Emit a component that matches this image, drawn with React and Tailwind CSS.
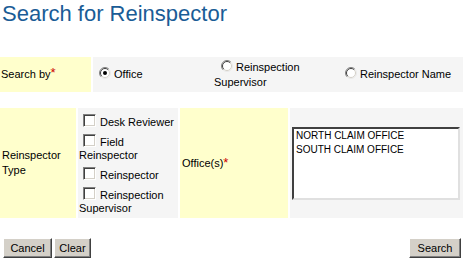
import React from "react";

function Radio({ checked }) {
  return (
    <svg width="12" height="12" viewBox="0 0 12 12" className="inline-block align-baseline mr-[3px] mb-[-1px]">
      <circle cx="6" cy="6" r="5.5" fill="#ffffff" />
      <path d="M 2.1 9.9 A 5.5 5.5 0 0 1 9.9 2.1" stroke="#808080" strokeWidth="1" fill="none" />
      <path d="M 9.9 2.1 A 5.5 5.5 0 0 1 2.1 9.9" stroke="#e8e8e8" strokeWidth="1" fill="none" />
      <path d="M 2.8 9.2 A 4.5 4.5 0 0 1 9.2 2.8" stroke="#404040" strokeWidth="1" fill="none" />
      <path d="M 9.2 2.8 A 4.5 4.5 0 0 1 2.8 9.2" stroke="#d4d0c8" strokeWidth="1" fill="none" />
      {checked && <circle cx="6" cy="6" r="2" fill="#000000" />}
    </svg>
  );
}

function Check() {
  return (
    <span className="inline-block align-baseline w-[13px] h-[13px] mt-[5px] mb-[-1px] ml-[4px] mr-[4px] bg-white border border-t-[#808080] border-l-[#808080] border-r-white border-b-white shadow-[inset_1px_1px_#404040,inset_-1px_-1px_#d4d0c8]" />
  );
}

function Btn({ children, w }) {
  return (
    <button
      className={`${w} h-[20px] bg-[#d4d0c8] text-black text-[11px] leading-[14px] border border-t-white border-l-white border-r-[#404040] border-b-[#404040] shadow-[inset_-1px_-1px_#808080] flex items-center justify-center`}
    >
      {children}
    </button>
  );
}

export default function App() {
  return (
    <div className="w-[466px] h-[262px] bg-white text-black overflow-hidden" style={{ fontFamily: '"Liberation Sans", Arial, sans-serif' }}>
      <div className="pl-[2px] pt-[1px] text-[22px] leading-[25px] text-[#1a5c96]">Search for Reinspector</div>

      <div className="mt-[31px] w-[463px] h-[35px] flex gap-[2px] text-[11px]">
        <div className="w-[91px] bg-[#ffffcc] flex items-center pl-[1px]">
          Search by<span className="text-[#cc0000] text-[13px] leading-[11px] self-start mt-[10px]">*</span>
        </div>
        <div className="flex-1 bg-[#f5f5f5] flex items-center">
          <div className="w-[121px] pl-[6px] leading-[15px]">
            <Radio checked />Office
          </div>
          <div className="w-[126px] leading-[15px] indent-[7px]">
            <Radio />Reinspection Supervisor
          </div>
          <div className="flex-1 pl-[5px] leading-[15px]">
            <Radio />Reinspector Name
          </div>
        </div>
      </div>

      <div className="mt-[16px] w-[463px] h-[110px] flex gap-[2px] text-[11px]">
        <div className="w-[76px] bg-[#ffffcc] flex items-center pl-[2px] leading-[15px]">
          Reinspector Type
        </div>
        <div className="w-[100px] bg-[#f5f5f5] flex flex-col justify-start pt-[1px] pl-[1px] leading-[13px]">
          <div><Check />Desk Reviewer</div>
          <div><Check />Field Reinspector</div>
          <div><Check />Reinspector</div>
          <div><Check />Reinspection Supervisor</div>
        </div>
        <div className="w-[108px] bg-[#ffffcc] flex items-center pl-[2px]">
          Office(s)<span className="text-[#cc0000] text-[13px] leading-[11px] self-start mt-[49px]">*</span>
        </div>
        <div className="flex-1 bg-[#f5f5f5] flex items-center pl-[2px]">
          <div className="w-[168px] h-[73px] bg-white border-2 border-t-[#404040] border-l-[#404040] border-r-[#e0e0e0] border-b-[#e0e0e0] pl-[2px] text-[10px] leading-[14px]">
            <div>NORTH CLAIM OFFICE</div>
            <div>SOUTH CLAIM OFFICE</div>
          </div>
        </div>
      </div>

      <div className="mt-[20px] w-[461px] pl-[3px] flex items-center">
        <Btn w="w-[49px]">Cancel</Btn>
        <div className="ml-[2px]">
          <Btn w="w-[37px]">Clear</Btn>
        </div>
        <div className="ml-auto">
          <Btn w="w-[52px]">Search</Btn>
        </div>
      </div>
    </div>
  );
}
